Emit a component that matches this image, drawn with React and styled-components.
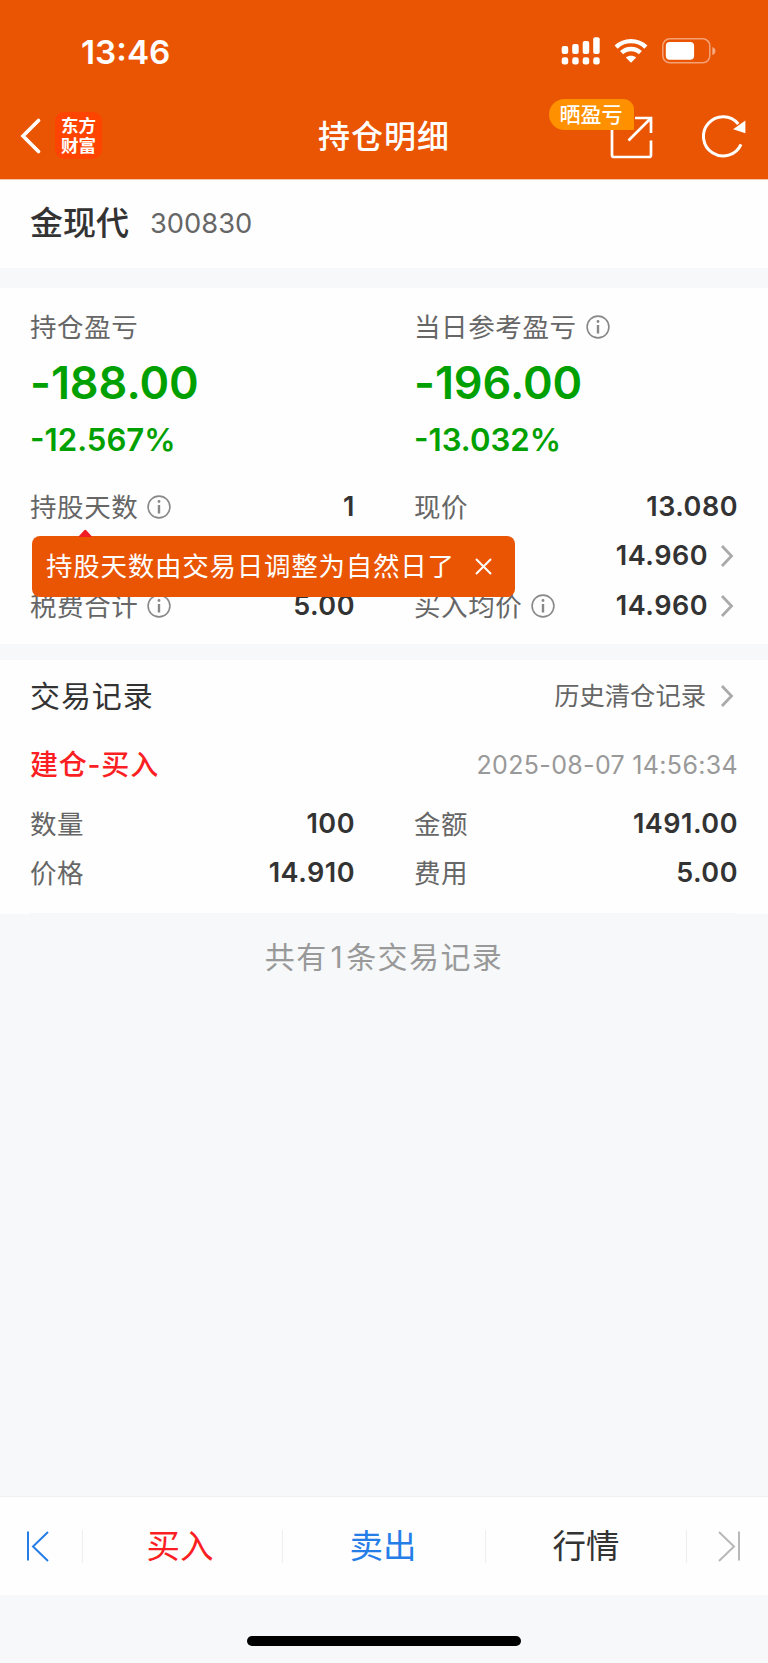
import React from "react";
import styled, { createGlobalStyle } from "styled-components";

const GlobalStyle = createGlobalStyle`
  * { box-sizing: border-box; }
  body {
    margin: 0;
    background: #f6f8fa;
    font-family: Inter, "Noto Sans CJK SC", sans-serif;
    color: #333;
  }
`;

const Screen = styled.div`
  display: flex;
  flex-direction: column;
  width: 768px;
  height: 1663px;
  overflow: hidden;
`;

/* Header */
const Header = styled.header`
  height: 180px;
  flex: none;
  background: #ea5504;
  color: #fff;
  border-bottom: 1px solid #f8c3a5;
`;
const StatusBar = styled.div`
  height: 102px;
  padding: 0 52px 0 81px;
  display: flex;
  align-items: center;
  justify-content: space-between;
`;
const Clock = styled.span`
  margin-top: 1px;
  font-size: 33.3px;
  font-weight: 600;
  line-height: 40px;
`;
const StatusIcons = styled.div`
  display: flex;
  align-items: center;
`;
const NavBar = styled.div`
  height: 68px;
  padding: 0 20px;
  display: grid;
  grid-template-columns: 1fr auto 1fr;
  align-items: center;
`;
const NavLeft = styled.div`
  display: flex;
  align-items: center;
  gap: 13px;
`;
const Logo = styled.div`
  width: 47px;
  height: 47px;
  margin-bottom: 1px;
  border-radius: 9px;
  background: #ff4400;
  display: flex;
  flex-direction: column;
  justify-content: center;
  align-items: center;
  font-size: 17.5px;
  font-weight: 700;
  line-height: 19.5px;
`;
const NavTitle = styled.h1`
  margin: 2px 0 0;
  font-size: 32px;
  font-weight: 500;
  line-height: 40px;
  letter-spacing: 1px;
`;
const NavRight = styled.div`
  display: flex;
  justify-content: flex-end;
  align-items: center;
  gap: 48px;
`;
const ShareButton = styled.div`
  position: relative;
  display: flex;
  margin-top: 2px;
`;
const ShareBadge = styled.span`
  position: absolute;
  right: 20px;
  bottom: 29px;
  width: 85px;
  height: 31px;
  padding-right: 1px;
  border-radius: 16px 11px 0 16px;
  background: #ff9000;
  font-size: 21px;
  font-weight: 500;
  line-height: 31px;
  text-align: center;
  white-space: nowrap;
`;

/* Cards */
const StockBar = styled.section`
  height: 88px;
  flex: none;
  padding: 0 30px 3px;
  display: flex;
  align-items: center;
  gap: 21px;
  background: #fefefe;
`;
const StockName = styled.span`
  font-size: 33px;
  font-weight: 500;
  line-height: 40px;
`;
const StockCode = styled.span`
  margin-top: 2px;
  font-size: 27.3px;
  line-height: 40px;
  color: #666;
`;
const Card = styled.section`
  position: relative;
  flex: none;
  height: ${(p) => p.$height}px;
  margin-top: ${(p) => p.$gap}px;
  padding: ${(p) => p.$top}px 31px 0 30px;
  background: #fefefe;
`;
const Columns = styled.div`
  display: grid;
  grid-template-columns: 324px 323px;
  column-gap: 60px;
`;
const Label = styled.span`
  display: flex;
  align-items: center;
  gap: 9px;
  font-size: 26.5px;
  line-height: 36px;
  letter-spacing: 0.6px;
  color: #666;
  white-space: nowrap;
`;
const Profit = styled.div`
  margin-top: 12px;
  font-size: 45px;
  font-weight: 600;
  line-height: 52px;
  letter-spacing: -0.05px;
  color: #00a000;
`;
const ProfitRate = styled.div`
  margin-top: 13px;
  font-size: 31.2px;
  font-weight: 600;
  line-height: 36px;
  color: #00a000;
`;
const Rows = styled(Columns)`
  grid-auto-rows: 49.3px;
  margin-top: ${(p) => p.$top}px;
`;
const Row = styled.div`
  display: flex;
  align-items: center;
  justify-content: space-between;
`;
const Value = styled.span`
  margin-left: auto;
  margin-right: -1px;
  display: flex;
  align-items: center;
  gap: 12px;
  font-size: 27px;
  font-weight: 600;
  line-height: 36px;
  letter-spacing: 0.5px;
  padding-right: ${(p) => (p.$link ? 4 : 0)}px;
`;

/* Tooltip over the figures */
const Tip = styled.div`
  position: absolute;
  left: 32px;
  top: 248px;
  width: 483px;
  height: 61px;
  padding: 0 23px 0 14px;
  border-radius: 8px;
  background: #ea5504;
  color: #fff;
  display: flex;
  align-items: center;
  justify-content: space-between;
  font-size: 26.5px;
  letter-spacing: 0.75px;
  line-height: 36px;
  white-space: nowrap;
`;
const TipText = styled.span`
  margin-bottom: 2px;
`;
const TipCaret = styled.svg`
  position: absolute;
  left: 46px;
  top: -7px;
`;

/* Trades */
const Line = styled.div`
  display: flex;
  align-items: center;
  justify-content: space-between;
  height: ${(p) => p.$height}px;
`;
const Heading = styled.h2`
  margin: 0;
  font-size: 30px;
  font-weight: 400;
  line-height: 40px;
  letter-spacing: 0.9px;
`;
const HistoryLink = styled.span`
  display: flex;
  align-items: center;
  gap: 14px;
  padding-right: 3px;
  font-size: 25.3px;
  line-height: 36px;
  color: #666;
`;
const TradeKind = styled.span`
  font-size: 28px;
  font-weight: 500;
  line-height: 36px;
  letter-spacing: 0.8px;
  color: #fb1e23;
`;
const TradeTime = styled.time`
  margin-right: -1px;
  font-size: 25px;
  letter-spacing: 0.33px;
  color: #999;
`;
const CardRule = styled.div`
  height: 1px;
  margin-top: 15px;
  background: #f5f7fa;
`;
const Total = styled.p`
  flex: 1;
  margin: 0;
  padding-top: 23px;
  font-size: 30px;
  line-height: 40px;
  letter-spacing: 1.4px;
  text-align: center;
  color: #999;
`;
const Count = styled.span`
  padding: 0 2px 0 3px;
`;

/* Bottom bar */
const ActionBar = styled.nav`
  flex: none;
  height: 99px;
  display: grid;
  grid-template-columns: 83px 200px 203px 201px 81px;
  align-items: center;
  border-top: 1px solid #eff0f2;
  background: #fefefe;
`;
const Action = styled.div`
  height: 33px;
  padding: 0 ${(p) => p.$right || 0}px 0 ${(p) => p.$left || 0}px;
  display: flex;
  align-items: center;
  justify-content: center;
  border-right: ${(p) => (p.$last ? "0" : "1px solid #eee")};
  font-size: 33.5px;
  line-height: 30px;
  color: ${(p) => p.$color};
`;
const HomeArea = styled.div`
  flex: none;
  height: 68px;
  padding-top: 41px;
  display: flex;
  justify-content: center;
  background: #f6f8fa;
`;
const HomeIndicator = styled.div`
  width: 274px;
  height: 10px;
  border-radius: 5px;
  background: #000;
`;

const Info = () => (
  <svg width="24" height="24" viewBox="0 0 24 24" fill="none" stroke="#888">
    <circle cx="12" cy="12" r="10.9" strokeWidth="1.6" />
    <path d="M12 10v8.5" strokeWidth="2.4" />
    <circle cx="12" cy="6.5" r="1.4" fill="#888" stroke="none" />
  </svg>
);
const Chevron = () => (
  <svg width="14" height="24" viewBox="0 0 14 24" fill="none" stroke="#aaa" strokeWidth="2.8">
    <path d="M2 2l9.5 10L2 22" />
  </svg>
);
const Signal = () => (
  <svg width="40" height="30" viewBox="0 0 40 30" fill="#fff">
    {[10, 8, 5, 1.3].map((top, i) => (
      <g key={top}>
        <rect x={0.7 + i * 10.5} y={top} width="6.5" height={18 - top} rx="2" />
        <rect x={0.7 + i * 10.5} y="21.3" width="6.5" height="7.3" rx="2.4" />
      </g>
    ))}
  </svg>
);
const Wifi = () => (
  <svg width="34" height="26" viewBox="0 0 34 26" fill="none" stroke="#fff" strokeWidth="4.4">
    <path d="M2.1 9.1C10.2 1.1 23.8 1.1 31.9 9.1" />
    <path d="M7.6 14.7C12.8 9.7 21.2 9.7 26.4 14.7" />
    <path d="M11.8 19.6C14.7 17 19.3 17 22.2 19.6L17 24.8Z" fill="#fff" stroke="none" />
  </svg>
);
const Battery = () => (
  <svg width="54" height="26" viewBox="0 0 54 26">
    <rect x="0.8" y="0.8" width="47" height="24" rx="7" fill="none" stroke="#fff" strokeOpacity=".45" strokeWidth="1.5" />
    <rect x="3.8" y="4" width="28.3" height="17.7" rx="4" fill="#fff" />
    <path d="M50.3 9v8q3.1-1 3.1-4t-3.1-4" fill="#fff" fillOpacity=".5" />
  </svg>
);

function Figure({ label, value, info, link }) {
  return (
    <Row>
      {label && <Label>{label}{info && <Info />}</Label>}
      {value && <Value $link={link}>{value}{link && <Chevron />}</Value>}
    </Row>
  );
}

export default function App() {
  return (
    <Screen>
      <GlobalStyle />
      <Header>
        <StatusBar>
          <Clock>13:46</Clock>
          <StatusIcons>
            <Signal />
            <svg width="13" height="1" />
            <Wifi />
            <svg width="14" height="1" />
            <Battery />
          </StatusIcons>
        </StatusBar>
        <NavBar>
          <NavLeft>
            <svg width="22" height="36" viewBox="0 0 22 36" fill="none" stroke="#fff" strokeWidth="3.6" strokeLinecap="round">
              <path d="M18.5 2.5L3 18l15.5 15.5" />
            </svg>
            <Logo><span>东方</span><span>财富</span></Logo>
          </NavLeft>
          <NavTitle>持仓明细</NavTitle>
          <NavRight>
            <ShareButton>
              <svg width="44" height="44" viewBox="0 0 44 44" fill="none" stroke="#fff" strokeWidth="2.7">
                <path d="M2 4v36q0 2 2 2h35q2 0 2-2V25.5M18.5 25.5L41 3M25 3h16v15" />
              </svg>
              <ShareBadge>晒盈亏</ShareBadge>
            </ShareButton>
            <svg width="46" height="46" viewBox="0 0 46 46" fill="none" stroke="#fff" strokeWidth="3">
              <path d="M39 31.3A19.6 19.6 0 1 1 36.3 11" />
              <path d="M43.4 7.6V20.3L31.1 16.3Z" fill="#fff" stroke="none" />
            </svg>
          </NavRight>
        </NavBar>
      </Header>

      <StockBar>
        <StockName>金现代</StockName>
        <StockCode>300830</StockCode>
      </StockBar>

      <Card $height={356} $gap={20} $top={21}>
        <Columns>
          <div>
            <Label>持仓盈亏</Label>
            <Profit>-188.00</Profit>
            <ProfitRate>-12.567%</ProfitRate>
          </div>
          <div>
            <Label>当日参考盈亏<Info /></Label>
            <Profit>-196.00</Profit>
            <ProfitRate>-13.032%</ProfitRate>
          </div>
        </Columns>
        <Rows $top={24.5}>
          <Figure label="持股天数" value="1" info />
          <Figure label="现价" value="13.080" />
          <Figure />
          <Figure value="14.960" link />
          <Figure label="税费合计" value="5.00" info />
          <Figure label="买入均价" value="14.960" info link />
        </Rows>
        <Tip>
          <TipCaret width="16" height="8" viewBox="0 0 16 8">
            <path d="M1 8V7L6 1.5Q7.3 0 8.5 1.5L13.5 7V8Z" fill="#f21e26" />
          </TipCaret>
          <TipText>持股天数由交易日调整为自然日了</TipText>
          <svg width="17" height="17" viewBox="0 0 17 17" stroke="#fff" strokeWidth="2">
            <path d="M1 1l15 15M16 1L1 16" />
          </svg>
        </Tip>
      </Card>

      <Card $height={253.5} $gap={16} $top={0}>
        <Line $height={72}>
          <Heading>交易记录</Heading>
          <HistoryLink>历史清仓记录<Chevron /></HistoryLink>
        </Line>
        <Line $height={65}>
          <TradeKind>建仓-买入</TradeKind>
          <TradeTime>2025-08-07 14:56:34</TradeTime>
        </Line>
        <Rows $top={2}>
          <Figure label="数量" value="100" />
          <Figure label="金额" value="1491.00" />
          <Figure label="价格" value="14.910" />
          <Figure label="费用" value="5.00" />
        </Rows>
        <CardRule />
      </Card>

      <Total>共有<Count>1</Count>条交易记录</Total>

      <ActionBar>
        <Action $color="#257de8" $right={6}>
          <svg width="24" height="32" viewBox="0 0 24 32" fill="none" stroke="#257de8" strokeWidth="2">
            <path d="M2 1.5v29M22 2L7 16.500 22 31" />
          </svg>
        </Action>
        <Action $color="#fb1e23" $right={5}>买入</Action>
        <Action $color="#257de8" $right={2}>卖出</Action>
        <Action $color="#333">行情</Action>
        <Action $color="#bbb" $left={3} $last>
          <svg width="24" height="32" viewBox="0 0 24 32" fill="none" stroke="#b8b8b8" strokeWidth="2">
            <path d="M22 1.5v29M2 2l15 14.5L2 31" />
          </svg>
        </Action>
      </ActionBar>
      <HomeArea><HomeIndicator /></HomeArea>
    </Screen>
  );
}
